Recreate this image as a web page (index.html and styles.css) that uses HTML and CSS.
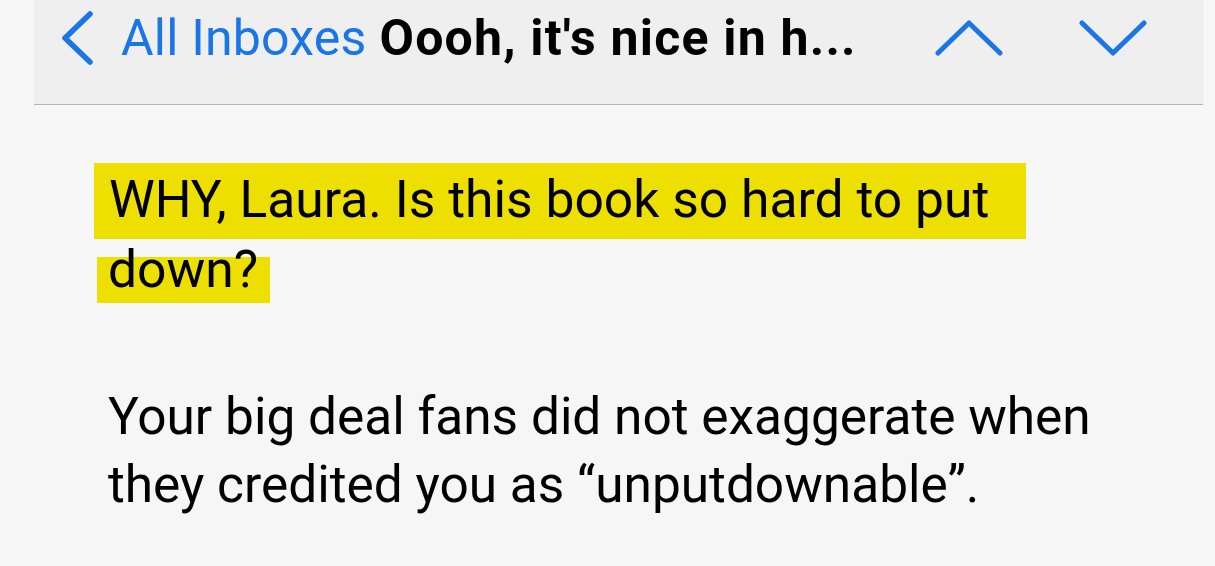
FILE: index.html
```html
<!DOCTYPE html>
<html lang="en">
<head>
<meta charset="utf-8">
<title>Mail</title>
<link rel="stylesheet" href="styles.css">
</head>
<body>
<header class="nav">
  <svg class="back" width="36" height="58" viewBox="0 0 36 58"><path d="M31 5 L6 29 L31 53" fill="none" stroke="#1a75e6" stroke-width="5.5" stroke-linecap="round" stroke-linejoin="round"/></svg>
  <span class="back-label">All Inboxes</span>
  <span class="title">Oooh, it's nice in h...</span>
  <div class="arrows">
    <svg class="arrow" width="68" height="40" viewBox="0 0 68 40"><path d="M3 35 L34 5 L65 35" fill="none" stroke="#1a75e6" stroke-width="5" stroke-linecap="round" stroke-linejoin="round"/></svg>
    <svg class="arrow" width="68" height="40" viewBox="0 0 68 40"><path d="M3 5 L34 35 L65 5" fill="none" stroke="#1a75e6" stroke-width="5" stroke-linecap="round" stroke-linejoin="round"/></svg>
  </div>
</header>
<main class="content">
  <p class="lead"><span class="hl hl-a">WHY, Laura. Is this book so hard to put</span><br><span class="hl hl-b">down?</span></p>
  <p class="body">Your big deal fans did not exaggerate when they credited you as “unputdownable”.</p>
</main>
</body>
</html>
```
FILE: styles.css
```css
html, body {
  margin: 0;
  padding: 0;
}
body {
  background: #f6f6f6;
  font-family: Roboto, "Liberation Sans", sans-serif;
  color: #000;
  width: 1215px;
  height: 566px;
  overflow: hidden;
}
.nav {
  margin: 0 12px 0 34px;
  background: #efefef;
  border-bottom: 1px solid #b4b4b4;
  display: flex;
  align-items: center;
  padding-left: 25px;
  padding-bottom: 28px;
  box-sizing: border-box;
  height: 105px;
}
.back {
  flex: none;
  margin-right: 26px;
}
.back-label {
  color: #1a75e6;
  font-size: 50px;
  letter-spacing: 0.2px;
  margin-right: 13px;
}
.title {
  font-size: 50px;
  font-weight: 700;
  letter-spacing: 1.2px;
}
.arrows {
  display: flex;
  gap: 76px;
  margin-left: auto;
  margin-right: 56px;
}
.content {
  padding: 60px 0 0 94px;
}
.lead {
  margin: 0;
  font-size: 51.6px;
  line-height: 70px;
}
.hl-a {
  background: #ede000;
  padding: 6px 37px 9px 15px;
}
.hl-b {
  background: linear-gradient(transparent 18px, #ede000 18px);
  padding: 0 12px 3px 11px;
  margin-left: 3px;
}
.body {
  margin: 78px 0 0 14px;
  font-size: 51.4px;
  line-height: 68px;
  width: 1050px;
}
```
